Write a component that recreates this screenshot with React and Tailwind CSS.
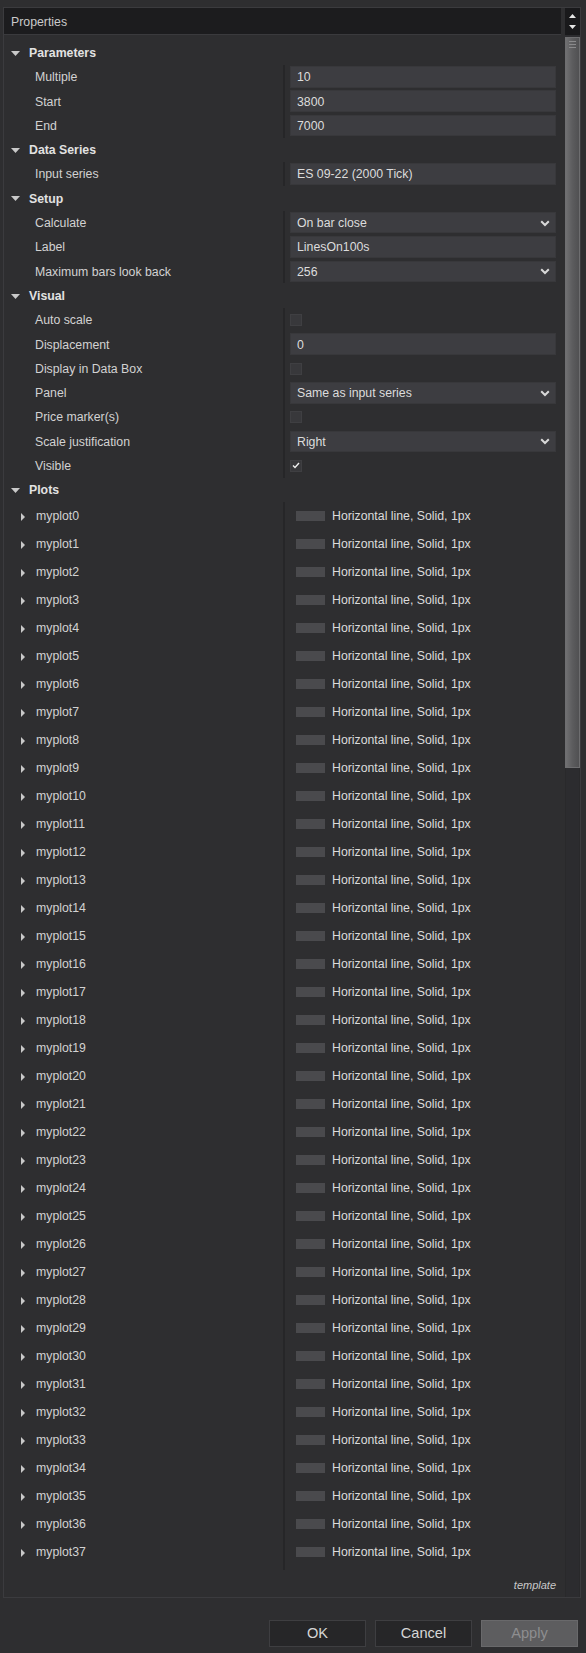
import React from "react";

const sections = [
  {
    title: "Parameters",
    rows: [
      ["Multiple", "text", "10"],
      ["Start", "text", "3800"],
      ["End", "text", "7000"],
    ],
  },
  { title: "Data Series", rows: [["Input series", "text", "ES 09-22 (2000 Tick)"]] },
  {
    title: "Setup",
    rows: [
      ["Calculate", "select", "On bar close"],
      ["Label", "text", "LinesOn100s"],
      ["Maximum bars look back", "select", "256"],
    ],
  },
  {
    title: "Visual",
    rows: [
      ["Auto scale", "check", false],
      ["Displacement", "text", "0"],
      ["Display in Data Box", "check", false],
      ["Panel", "select", "Same as input series"],
      ["Price marker(s)", "check", false],
      ["Scale justification", "select", "Right"],
      ["Visible", "check", true],
    ],
  },
];

const plots = Array.from({ length: 38 }, (_, i) => "myplot" + i);

function DownTri() {
  return (
    <svg width="9" height="5" viewBox="0 0 9 5" className="shrink-0">
      <path d="M0 0 L9 0 L4.5 5 Z" fill="#c9c9c9" />
    </svg>
  );
}

function RightTri() {
  return (
    <svg width="4" height="8" viewBox="0 0 4 8" className="shrink-0">
      <path d="M0 0 L4 4 L0 8 Z" fill="#c9c9c9" />
    </svg>
  );
}

function Chevron() {
  return (
    <svg width="10" height="7" viewBox="0 0 10 7" className="shrink-0">
      <path d="M1.2 1.2 L5 5 L8.8 1.2" fill="none" stroke="#d8d8d8" strokeWidth="2" />
    </svg>
  );
}

function Category({ title }) {
  return (
    <div className="h-[24.3px] flex items-center pl-[7px] pt-px">
      <DownTri />
      <span className="ml-[9px] font-bold text-[#e2e2e2]">{title}</span>
    </div>
  );
}

function Value({ type, value }) {
  if (type === "check") {
    return (
      <div className="w-[12px] h-[12px] bg-[#38383b] border border-[#3f3f42] flex items-center justify-center">
        {value && (
          <svg width="8" height="7" viewBox="0 0 8 7">
            <path d="M1 3.5 L3 5.5 L7 1" fill="none" stroke="#f0f0f0" strokeWidth="1.4" />
          </svg>
        )}
      </div>
    );
  }
  return (
    <div className="w-[266px] h-[21.5px] bg-[#3d3d41] border border-[#38383b] flex items-center pl-[6px] pr-[5px] pt-px text-[#dcdcdc]">
      <span className="flex-1">{value}</span>
      {type === "select" && <Chevron />}
    </div>
  );
}

function PropRow({ label, type, value }) {
  return (
    <div className="h-[24.3px] flex">
      <div className="w-[279px] shrink-0 flex items-center pl-[31px] pt-px text-[#d2d2d2]">{label}</div>
      <div className="flex-1 border-l-2 border-[#262628] flex items-center pl-[5px]">
        <Value type={type} value={value} />
      </div>
    </div>
  );
}

function PlotRow({ name }) {
  return (
    <div className="h-[28px] flex">
      <div className="w-[279px] shrink-0 flex items-center pl-[17px] pt-px text-[#d2d2d2]">
        <RightTri />
        <span className="ml-[11px]">{name}</span>
      </div>
      <div className="flex-1 border-l-2 border-[#262628] flex items-center pl-[11px]">
        <div className="w-[29px] h-[10px] bg-[#4a4a4d]" />
        <span className="ml-[7px] pt-px text-[#dcdcdc]">Horizontal line, Solid, 1px</span>
      </div>
    </div>
  );
}

export default function App() {
  return (
    <div className="w-[586px] h-[1653px] bg-[#2e2e30] pt-[7px] font-['Liberation_Sans',Arial,sans-serif] text-[12.3px] leading-none text-[#d2d2d2] overflow-hidden">
      <div className="ml-[3px] w-[578px] h-[1591px] border border-[#3b3b3e] flex">
        <div className="w-[558px] flex flex-col">
          <div className="h-[27px] shrink-0 bg-[#1c1c1e] border-b border-[#3a3a3d] flex items-center pl-[7px] pt-[2px] text-[#cacaca]">
            Properties
          </div>
          <div className="pt-[5.5px] flex flex-col">
            {sections.map((s) => (
              <React.Fragment key={s.title}>
                <Category title={s.title} />
                {s.rows.map(([l, t, v]) => (
                  <PropRow key={l} label={l} type={t} value={v} />
                ))}
              </React.Fragment>
            ))}
            <Category title="Plots" />
            {plots.map((p) => (
              <PlotRow key={p} name={p} />
            ))}
            <div className="h-[4px] flex">
              <div className="w-[279px] shrink-0" />
              <div className="flex-1 border-l-2 border-[#262628]" />
            </div>
          </div>
          <div className="mt-auto h-[22px] mb-[1px] flex items-center justify-end pr-[5px] italic text-[11px] text-[#c8c8c8]">
            template
          </div>
        </div>
        <div className="w-[15px] ml-[4px] flex flex-col bg-[#2c2c2f]">
          <div className="h-[27px] bg-[#19191b] flex flex-col items-center justify-center gap-[7px]">
            <svg width="7" height="4" viewBox="0 0 7 4">
              <path d="M0 4 L3.5 0 L7 4 Z" fill="#e6e6e6" />
            </svg>
            <svg width="7" height="4" viewBox="0 0 7 4">
              <path d="M0 0 L7 0 L3.5 4 Z" fill="#e6e6e6" />
            </svg>
          </div>
          <div className="mt-[2px] h-[731px] bg-gradient-to-r from-[#707072] via-[#5c5c5e] to-[#505052] border border-[#6e6e70] flex flex-col items-center pt-[3px] gap-[2px]">
            <div className="w-[7px] h-px bg-[#8a8a8c]" />
            <div className="w-[7px] h-px bg-[#8a8a8c]" />
            <div className="w-[7px] h-px bg-[#8a8a8c]" />
          </div>
          <div className="flex-1 border-x border-[#29292b]" />
        </div>
      </div>
      <div className="mt-[22px] flex justify-end gap-[9px] pr-[8px] text-[14.6px]">
        <div className="w-[97px] h-[27px] bg-[#262628] border border-[#3e3e41] flex items-center justify-center text-[#d6d6d6]">
          OK
        </div>
        <div className="w-[97px] h-[27px] bg-[#262628] border border-[#3e3e41] flex items-center justify-center text-[#d6d6d6]">
          Cancel
        </div>
        <div className="w-[97px] h-[27px] bg-[#5d5d5f] border border-[#69696b] flex items-center justify-center text-[#8e8e90]">
          Apply
        </div>
      </div>
    </div>
  );
}
